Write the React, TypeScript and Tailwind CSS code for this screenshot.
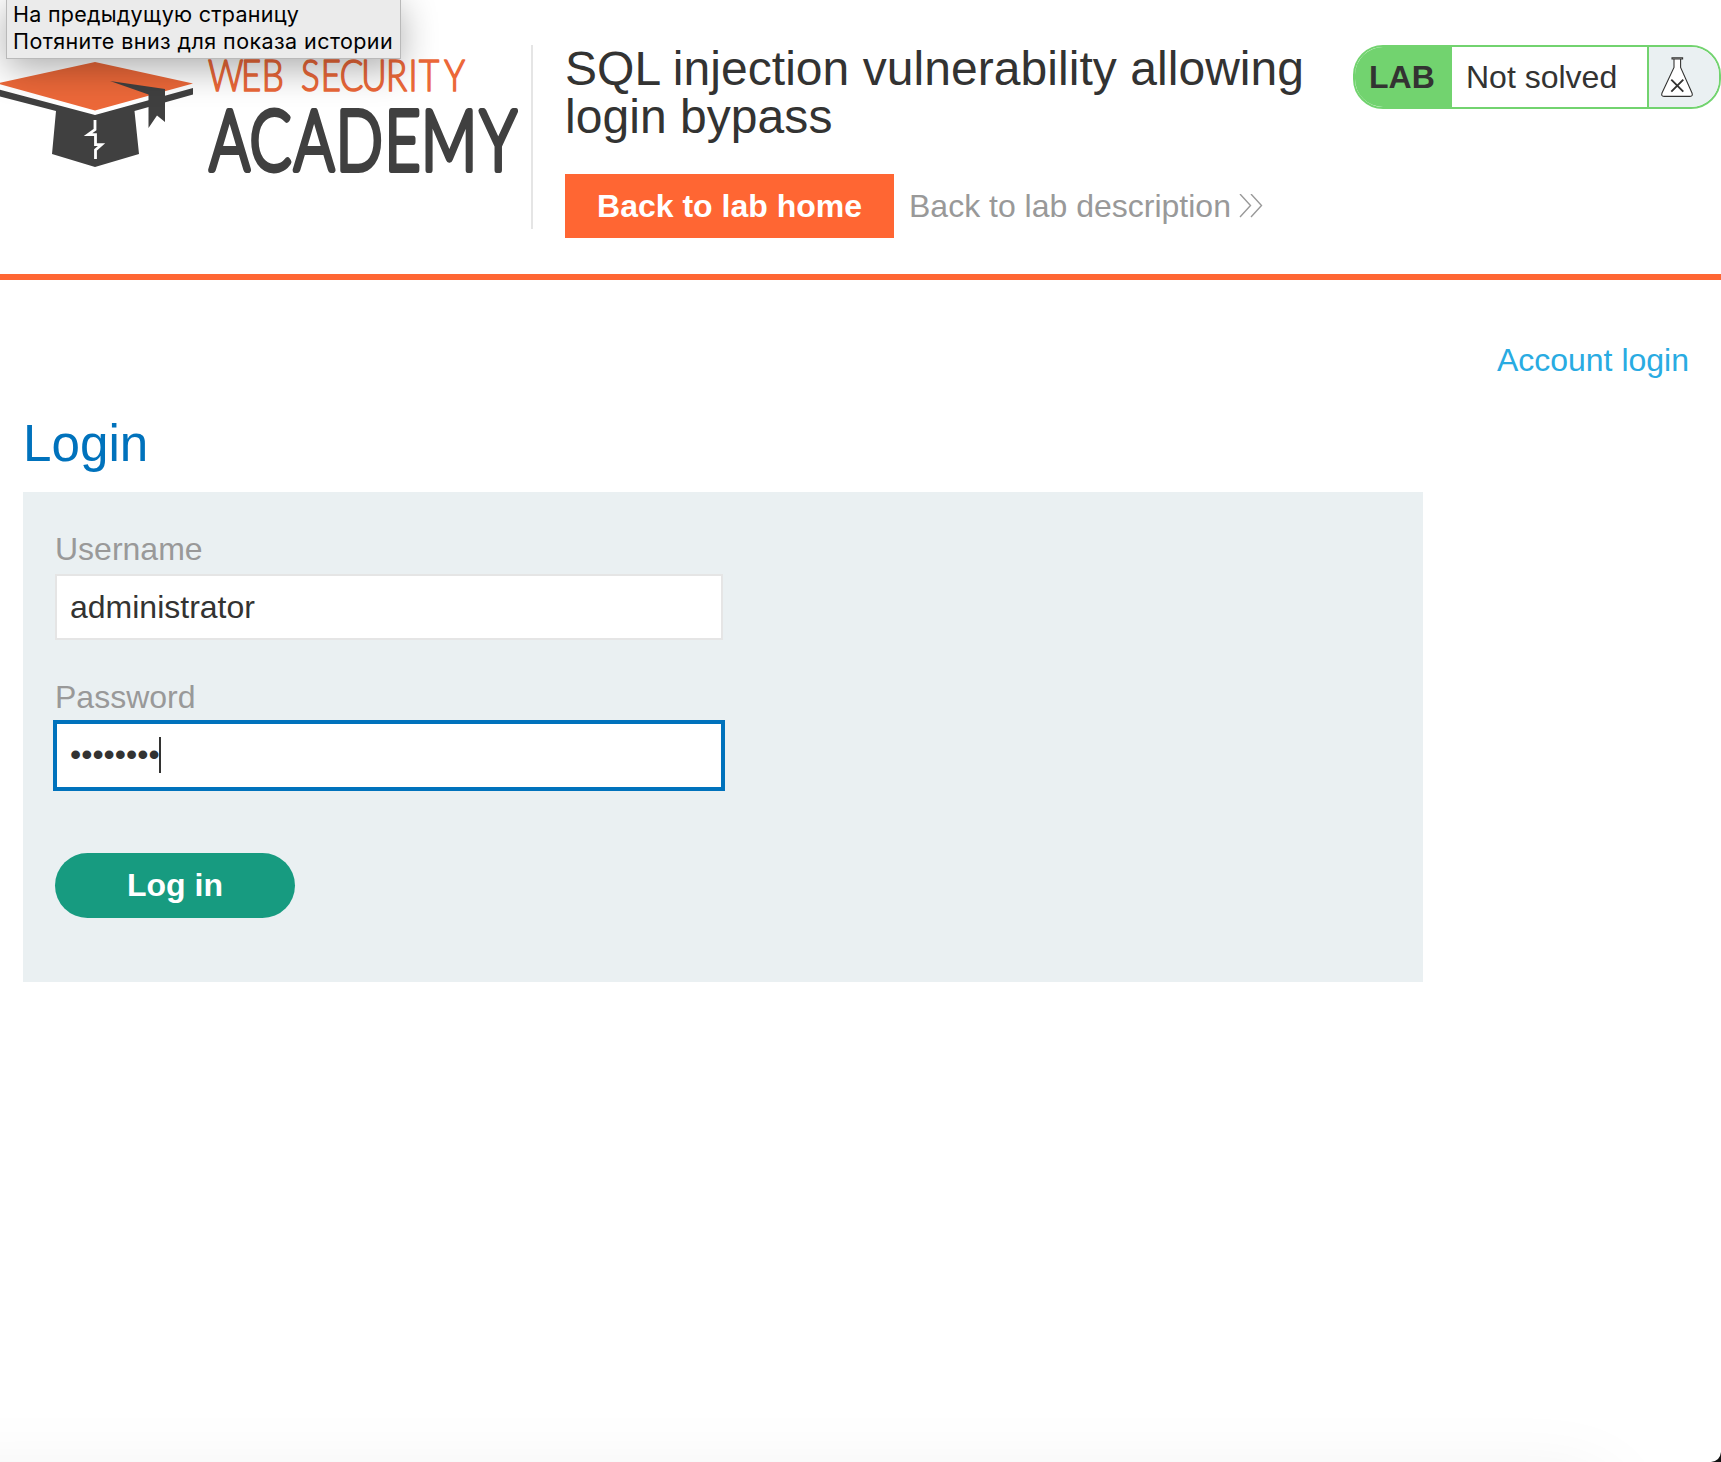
function AcademyLogo() {
  return (
    <svg
      className="block h-[184px] w-[531px] shrink-0"
      viewBox="0 45 531 184"
      role="img"
      aria-label="Web Security Academy"
    >
      <path d="M-3 89 L95 115 L193 88 V94.5 L134.5 111 L139 154 L95 167 L52 154 L56 111 L-3 95.7 Z" fill="#404040" />
      <path d="M-3 83.5 L95 62 L193 83.5 L95 110.5 Z" fill="#ec6839" />
      <path d="M110 81 L165 89 V122 L157 115.5 L148.5 128 V94.5 Z" fill="#404040" />
      <path
        d="M95 120 V129.5 L88 134.7 H95.5 V144.7 H101.5 L95.5 150 V159"
        fill="none"
        stroke="#fff"
        strokeWidth="2.8"
      />
      <g fontFamily="Lato, sans-serif" fontWeight="300" strokeLinejoin="round">
        <g transform="translate(0 91.2) scale(0.8 1)" fill="#ec6839" stroke="#ec6839">
          <text
            x="260.1 301.2 327.3 350 376.2 401 424.8 451.5 482.5 510.6 523.7 555.4"
            y="0"
            fontSize="43.5"
            strokeWidth="1.7"
          >
            WEB SECURITY
          </text>
        </g>
        <g transform="translate(0 170.1) scale(0.74 1)" fill="#404040" stroke="#404040">
          <text x="283.1 337.4 397.4 454.2 519.9 569.2 648.6" y="0" fontSize="83" strokeWidth="5.8">
            ACADEMY
          </text>
        </g>
      </g>
    </svg>
  );
}

function Flask() {
  return (
    <svg className="block h-[42px] w-[34px]" viewBox="1660 56 34 42" fill="none" stroke="#333332">
      <path
        d="M1674 59 V67.5 L1662 93 Q1660.8 96.4 1664 96.4 H1690 Q1693.2 96.4 1692 93 L1680.6 67.5 V59"
        fill="#fff"
        strokeWidth="1.1"
      />
      <path d="M1672 57.8 H1682.6 V59 H1672 Z" fill="#fff" strokeWidth="1.1" />
      <path d="M1671.3 79.7 L1683.3 91.7 M1683.3 79.7 L1671.3 91.7" strokeWidth="1.9" />
    </svg>
  );
}

function LabStatus() {
  return (
    <div className="flex h-16 w-[368px] shrink-0 overflow-hidden rounded-[30px] border-2 border-[#72d36f] bg-white">
      <div className="flex w-[97px] items-center bg-[#72d36f] pl-[14px] font-bold">LAB</div>
      <div className="flex w-[195px] items-center pl-[14px]">Not solved</div>
      <div className="flex flex-1 items-center border-l-2 border-[#72d36f] bg-[#eaf0f2] pl-[11px]">
        <Flask />
      </div>
    </div>
  );
}

function Header() {
  return (
    <header className="flex h-[280px] items-start border-b-[6px] border-[#ff6633] pt-[45px]">
      <AcademyLogo />
      <div className="h-[184px] w-[34px] shrink-0 border-l-2 border-[#e5e5e5]" />
      <div className="flex-1">
        <h1 className="w-[770px] text-[48px] leading-[48px] tracking-[0.05px]">
          SQL injection vulnerability allowing
          <br />
          login bypass
        </h1>
        <div className="mt-[33px] flex items-center">
          <a className="flex h-16 w-[329px] items-center justify-center bg-[#ff6633] font-bold whitespace-nowrap text-white">
            Back to lab home
          </a>
          <a className="ml-[15px] flex items-center whitespace-nowrap text-[#999999]">
            Back to lab description
            <svg className="ml-2 h-6 w-6" viewBox="0 0 24 24" fill="none" stroke="#999" strokeWidth="1.4">
              <path d="M1 0 L11.5 11.5 L1 23 M12 0 L22.5 11.5 L12 23" />
            </svg>
          </a>
        </div>
      </div>
      <LabStatus />
    </header>
  );
}

function LoginForm() {
  return (
    <section className="flex h-[490px] w-[1400px] flex-col items-start bg-[#eaf0f2] pt-[38px] pl-8">
      <label className="h-11 leading-[38px] text-[#999999]">Username</label>
      <div className="flex h-[66px] w-[668px] items-center border-2 border-[#e5e5e5] bg-white pl-[13px]">
        administrator
      </div>
      <label className="mt-[38px] h-[42px] leading-[38px] text-[#999999]">Password</label>
      <div className="-ml-0.5 flex h-[71px] w-[672px] items-center border-4 border-[#0072bc] bg-white pb-0.5 pl-[13px]">
        <span className="-mt-0.5 w-[89px]">••••••••</span>
        <span className="h-9 w-0.5 bg-[#333332]" />
      </div>
      <button className="mt-[62px] flex h-[65px] w-60 items-center justify-center rounded-full bg-[#179b80] pb-0.5 font-bold text-white">
        Log in
      </button>
    </section>
  );
}

export default function App() {
  return (
    <div className="relative h-[1462px] w-[1721px] overflow-hidden bg-white font-['Liberation_Sans',Arial,sans-serif] text-[32px] leading-[38px] text-[#333332]">
      <Header />
      <main>
        <div className="flex justify-end pt-[61px] pr-8">
          <a className="text-[#29abe2]">Account login</a>
        </div>
        <div className="pl-[23px]">
          <h2 className="pt-[36px] text-[51.2px] leading-[58px] text-[#0072bc]">Login</h2>
          <div className="pt-[19px]">
            <LoginForm />
          </div>
        </div>
      </main>
      <div className="absolute -top-1 left-[6px] h-[63px] w-[395px] border border-[#b9b9b9] bg-[#ebebeb] pt-[4px] pl-[6px] font-[Inter,sans-serif] text-[21.5px] leading-[27px] whitespace-nowrap text-black shadow-[0_10px_36px_rgba(0,0,0,0.32)]">
        <div className="tracking-[0.26px]">На предыдущую страницу</div>
        <div className="tracking-[0.42px]">Потяните вниз для показа истории</div>
      </div>
      <div className="absolute top-[1482px] -left-20 h-20 w-[1685px] rounded-xl shadow-[0_0_80px_rgba(0,0,0,0.08)]" />
      <svg className="absolute right-0 bottom-0 h-[10px] w-[10px]" viewBox="0 0 10 10">
        <path d="M10 0 Q9 9 0 10 H10 Z" fill="#111" />
      </svg>
    </div>
  );
}
